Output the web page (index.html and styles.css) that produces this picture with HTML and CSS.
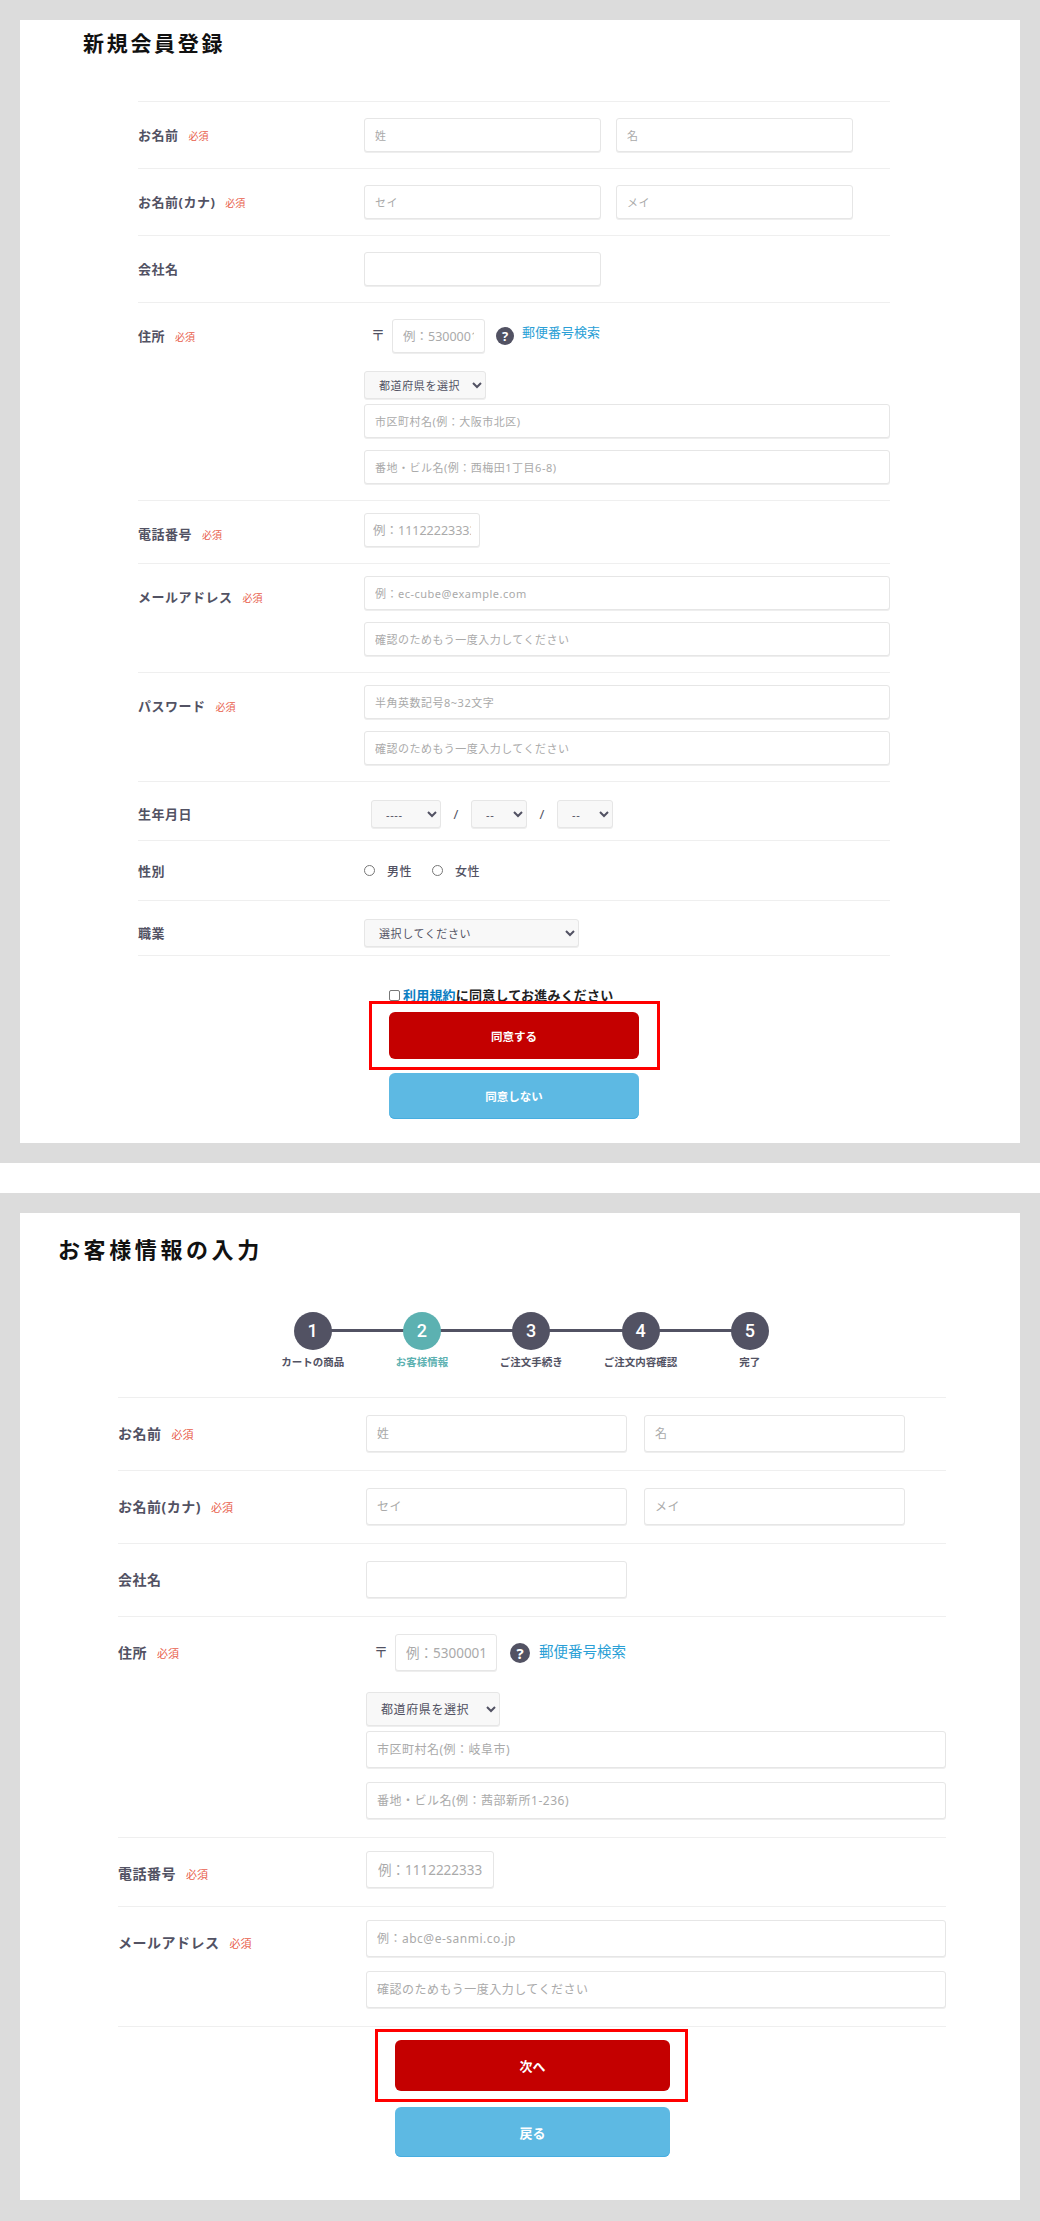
FILE: index.html
```html
<!DOCTYPE html>
<html lang="ja">

<head>
  <meta charset="utf-8">
  <title>新規会員登録 / お客様情報の入力</title>
  <link rel="stylesheet" href="styles.css">
</head>

<body>
  <section class="panel member">
    <h1 class="title">新規会員登録</h1>
    <form class="form">
      <div class="row">
        <div class="label">お名前<span class="req">必須</span></div>
        <div class="fields pair">
          <input class="half" placeholder="姓">
          <input class="half" placeholder="名">
        </div>
      </div>
      <div class="row">
        <div class="label">お名前(カナ)<span class="req">必須</span></div>
        <div class="fields pair">
          <input class="half" placeholder="セイ">
          <input class="half" placeholder="メイ">
        </div>
      </div>
      <div class="row">
        <div class="label">会社名</div>
        <div class="fields">
          <input class="half">
        </div>
      </div>
      <div class="row">
        <div class="label">住所<span class="req">必須</span></div>
        <div class="fields">
          <div class="zip">
            <span class="zipmark">〒</span>
            <input class="zipcode" placeholder="例：5300001">
            <span class="help">?</span>
            <a class="ziplink">郵便番号検索</a>
          </div>
          <select class="pref"><option>都道府県を選択</option></select>
          <input class="city" placeholder="市区町村名(例：大阪市北区)">
          <input class="addr" placeholder="番地・ビル名(例：西梅田1丁目6-8)">
        </div>
      </div>
      <div class="row tight">
        <div class="label low">電話番号<span class="req">必須</span></div>
        <div class="fields">
          <input class="tel" placeholder="例：11122223333">
        </div>
      </div>
      <div class="row tight">
        <div class="label low">メールアドレス<span class="req">必須</span></div>
        <div class="fields">
          <input placeholder="例：ec-cube@example.com">
          <input class="next" placeholder="確認のためもう一度入力してください">
        </div>
      </div>
      <div class="row tight">
        <div class="label low">パスワード<span class="req">必須</span></div>
        <div class="fields">
          <input placeholder="半角英数記号8~32文字">
          <input class="next" placeholder="確認のためもう一度入力してください">
        </div>
      </div>
      <div class="row birth">
        <div class="label">生年月日</div>
        <div class="fields dates">
          <select class="year"><option>----</option></select>
          <span class="slash">/</span>
          <select class="day"><option>--</option></select>
          <span class="slash">/</span>
          <select class="day"><option>--</option></select>
        </div>
      </div>
      <div class="row gender">
        <div class="label">性別</div>
        <div class="fields radios">
          <label class="radio"><input type="radio" name="sex">男性</label>
          <label class="radio"><input type="radio" name="sex">女性</label>
        </div>
      </div>
      <div class="row job">
        <div class="label">職業</div>
        <div class="fields">
          <select class="jobs"><option>選択してください</option></select>
        </div>
      </div>
    </form>
    <div class="actions">
      <label class="agree"><input type="checkbox"><a>利用規約</a>に同意してお進みください</label>
      <div class="mark"><button class="btn red" type="button">同意する</button></div>
      <button class="btn blue" type="button">同意しない</button>
    </div>
  </section>

  <div class="gap"></div>

  <section class="panel guest">
    <h1 class="title">お客様情報の入力</h1>
    <ol class="steps">
      <li class="step"><span class="num">1</span><span class="name">カートの商品</span></li>
      <li class="step on"><span class="num">2</span><span class="name">お客様情報</span></li>
      <li class="step"><span class="num">3</span><span class="name">ご注文手続き</span></li>
      <li class="step"><span class="num">4</span><span class="name">ご注文内容確認</span></li>
      <li class="step"><span class="num">5</span><span class="name">完了</span></li>
    </ol>
    <form class="form">
      <div class="row">
        <div class="label">お名前<span class="req">必須</span></div>
        <div class="fields pair">
          <input class="half" placeholder="姓">
          <input class="half" placeholder="名">
        </div>
      </div>
      <div class="row">
        <div class="label">お名前(カナ)<span class="req">必須</span></div>
        <div class="fields pair">
          <input class="half" placeholder="セイ">
          <input class="half" placeholder="メイ">
        </div>
      </div>
      <div class="row">
        <div class="label">会社名</div>
        <div class="fields">
          <input class="half">
        </div>
      </div>
      <div class="row">
        <div class="label">住所<span class="req">必須</span></div>
        <div class="fields">
          <div class="zip">
            <span class="zipmark">〒</span>
            <input class="zipcode" placeholder="例：5300001">
            <span class="help">?</span>
            <a class="ziplink">郵便番号検索</a>
          </div>
          <select class="pref"><option>都道府県を選択</option></select>
          <input class="city" placeholder="市区町村名(例：岐阜市)">
          <input class="addr" placeholder="番地・ビル名(例：茜部新所1-236)">
        </div>
      </div>
      <div class="row tight">
        <div class="label low">電話番号<span class="req">必須</span></div>
        <div class="fields">
          <input class="tel" placeholder="例：11122223333">
        </div>
      </div>
      <div class="row tight">
        <div class="label low">メールアドレス<span class="req">必須</span></div>
        <div class="fields">
          <input placeholder="例：abc@e-sanmi.co.jp">
          <input class="next" placeholder="確認のためもう一度入力してください">
        </div>
      </div>
    </form>
    <div class="actions">
      <div class="mark"><button class="btn red" type="button">次へ</button></div>
      <button class="btn blue" type="button">戻る</button>
    </div>
  </section>
</body>

</html>
```

FILE: styles.css
```css
* {
  box-sizing: border-box;
}

body {
  margin: 0;
  padding: 20px 0 22px;
  background: #dcdcdc;
  font-family: "Noto Sans", "Noto Sans CJK JP", sans-serif;
  color: #525263;
}

.panel {
  margin: 0 20px;
  background: #fff;
}

/* the two captures are the same form at different zoom levels */
.member {
  --form-left: 118px;
  --form-width: 752px;
  --label-col: 226px;
  --row-pad: 16px;
  --row-pad-top: 16px;
  --row-top: 12px;
  --h: 34px;
  --next: 12px;
  --half: 237px;
  --pair-gap: 15px;
  --text: 11px;
  --label: 13px;
  --req: 10px;
  --zip-left: 7px;
  --zip-w: 93px;
  --help: 18px;
  --link: 13px;
  --sel-h: 28px;
  padding: 11px 0 24px;
}

.guest {
  --form-left: 98px;
  --form-width: 828px;
  --label-col: 248px;
  --row-pad: 18px;
  --row-pad-top: 17px;
  --row-top: 13px;
  --h: 37px;
  --next: 14px;
  --half: 261px;
  --pair-gap: 17px;
  --text: 12px;
  --label: 14px;
  --req: 11px;
  --zip-left: 8px;
  --zip-w: 102px;
  --help: 20px;
  --link: 14.5px;
  --sel-h: 34px;
  padding: 22px 0 43px;
}

.gap {
  height: 30px;
  margin: 20px 0;
  background: #fff;
}

.title {
  margin: 0;
  font-size: 21px;
  line-height: 24px;
  font-weight: 700;
  letter-spacing: 2.7px;
  color: #111;
}

.member .title {
  padding-left: 63px;
  margin-bottom: 46px;
}

.guest .title {
  padding-left: 38px;
  font-size: 22px;
  line-height: 28px;
  letter-spacing: 3.6px;
  margin-bottom: 49px;
}

/* stepper */
.steps {
  display: flex;
  list-style: none;
  margin: 0 0 28px 238px;
  padding: 0;
}

.step {
  position: relative;
  width: 109.3px;
  display: flex;
  flex-direction: column;
  align-items: center;
}

.step:not(:last-child)::after {
  content: "";
  position: absolute;
  top: 17px;
  left: 50%;
  width: 100%;
  height: 3px;
  background: #525263;
}

.num {
  position: relative;
  z-index: 1;
  width: 38px;
  height: 38px;
  border-radius: 50%;
  background: #525263;
  color: #fff;
  font-family: Roboto, sans-serif;
  font-size: 18px;
  font-weight: 500;
  line-height: 38px;
  text-align: center;
}

.name {
  margin-top: 5px;
  font-size: 10.5px;
  line-height: 14px;
  font-weight: 700;
  white-space: nowrap;
}

.on .num {
  background: #5cb1b1;
}

.on .name {
  color: #5cb1b1;
}

/* form rows */
.form {
  width: var(--form-width);
  margin-left: var(--form-left);
}

.row {
  display: flex;
  border-top: 1px solid #efefef;
  padding: var(--row-pad-top) 0 var(--row-pad);
}

.row:last-child {
  border-bottom: 1px solid #efefef;
}

.row.tight {
  padding-top: var(--row-top);
}

.row.birth {
  padding: 18px 0 12px;
}

.row.gender {
  height: 60px;
  align-items: center;
  padding: 0;
}

.row.job {
  padding: 18px 0 8px;
}

.label {
  flex: none;
  width: var(--label-col);
  height: var(--h);
  font-size: var(--label);
  line-height: var(--h);
  font-weight: 700;
  letter-spacing: 0.5px;
}

.birth .label,
.job .label,
.gender .label {
  height: 28px;
  line-height: 28px;
}

.label.low {
  padding-top: 4px;
}

.req {
  margin-left: 10px;
  font-size: var(--req);
  line-height: 1;
  font-weight: 400;
  letter-spacing: 0;
  color: #e8604c;
}

.fields {
  flex: 1;
  min-width: 0;
}

.pair {
  display: flex;
  gap: var(--pair-gap);
}

input:not([type]) {
  display: block;
  width: 100%;
  height: var(--h);
  padding: 0 10px;
  border: 1px solid #e6e6e6;
  border-radius: 3px;
  box-shadow: 0 1px 0 #eee;
  background: #fff;
  font-family: inherit;
  font-size: var(--text);
  letter-spacing: 0.5px;
  color: #525263;
}

input::placeholder {
  color: #aaa;
}

input.half {
  width: var(--half);
}

input.tel {
  width: 116px;
  font-size: 12.5px;
  letter-spacing: 0;
  padding: 0 8px;
}

.guest input.tel {
  width: 128px;
  font-size: 13.5px;
  padding: 0 11px;
}

input.next,
input.addr {
  margin-top: var(--next);
}

input.city {
  margin-top: 5px;
}

.zip {
  display: flex;
  align-items: center;
  padding-left: var(--zip-left);
}

.zipmark {
  width: 21px;
  margin-bottom: 2px;
  font-size: 14px;
  line-height: 1;
}

input.zipcode {
  width: var(--zip-w);
  font-size: 12.5px;
  letter-spacing: 0;
}

.guest input.zipcode {
  font-size: 13.5px;
}

.help {
  flex: none;
  width: var(--help);
  height: var(--help);
  margin: 0 8px 0 11px;
  border-radius: 50%;
  background: #525263;
  color: #fff;
  font-size: calc(var(--help) - 5px);
  font-weight: 700;
  line-height: var(--help);
  text-align: center;
}

.guest .help {
  margin: 0 9px 0 13px;
}

.ziplink {
  margin-bottom: 5px;
  font-size: var(--link);
  color: #2a9fd6;
}

.member .ziplink {
  margin-bottom: 9px;
}

select {
  height: var(--sel-h);
  padding: 0 6px 0 10px;
  border: 1px solid #e6e6e6;
  border-radius: 3px;
  box-shadow: 0 1px 0 #eee;
  background-color: #f8f8f8;
  font-family: inherit;
  font-size: var(--text);
  letter-spacing: 0.6px;
  color: #525263;
}

.pref {
  display: block;
  width: 122px;
  margin-top: 18px;
}

.guest .pref {
  width: 134px;
  margin-top: 21px;
}

.dates {
  display: flex;
  align-items: center;
  padding-left: 7px;
}

.year {
  width: 70px;
}

.day {
  width: 56px;
}

.slash {
  width: 30px;
  text-align: center;
  font-size: 13px;
}

.radios {
  display: flex;
  gap: 20px;
}

.radio {
  display: flex;
  align-items: center;
  font-size: 12px;
  font-weight: 500;
  letter-spacing: 0.5px;
}

.radio input {
  appearance: none;
  width: 11px;
  height: 11px;
  margin: 0 12px 0 0;
  border: 1px solid #777;
  border-radius: 50%;
}

.jobs {
  width: 215px;
}

/* buttons */
.actions {
  display: flex;
  flex-direction: column;
  align-items: flex-start;
}

.member .actions {
  padding-left: 349px;
}

.guest .actions {
  padding-left: 355px;
  margin-top: 2px;
}

.agree {
  display: flex;
  align-items: center;
  margin: 33px 0 0 20px;
  font-size: 13px;
  line-height: 12px;
  font-weight: 700;
  letter-spacing: 0.2px;
  color: #222;
}

.agree input {
  appearance: none;
  width: 11px;
  height: 11px;
  margin: 0 3px 0 0;
  border: 1px solid #777;
  border-radius: 2px;
}

.agree a {
  color: #0a7dc2;
  text-decoration: underline;
}

.mark {
  border: 3px solid #f00;
}

.member .mark {
  padding: 8px 18px 8px 17px;
}

.guest .mark {
  padding: 8px 15px 8px 17px;
}

.btn {
  display: block;
  border: 0;
  border-radius: 6px;
  color: #fff;
  font-family: inherit;
  font-weight: 700;
}

.member .btn {
  width: 250px;
  height: 47px;
  font-size: 11.5px;
}

.guest .btn {
  width: 275px;
  height: 51px;
  font-size: 13px;
}

.red {
  background: #c40000;
}

.blue {
  background: #5db9e3;
  box-shadow: inset 0 -1px 0 #46ade0;
}

.member .blue {
  height: 46px;
  margin: 3px 0 0 20px;
}

.guest .blue {
  height: 50px;
  margin: 5px 0 0 20px;
}
```
